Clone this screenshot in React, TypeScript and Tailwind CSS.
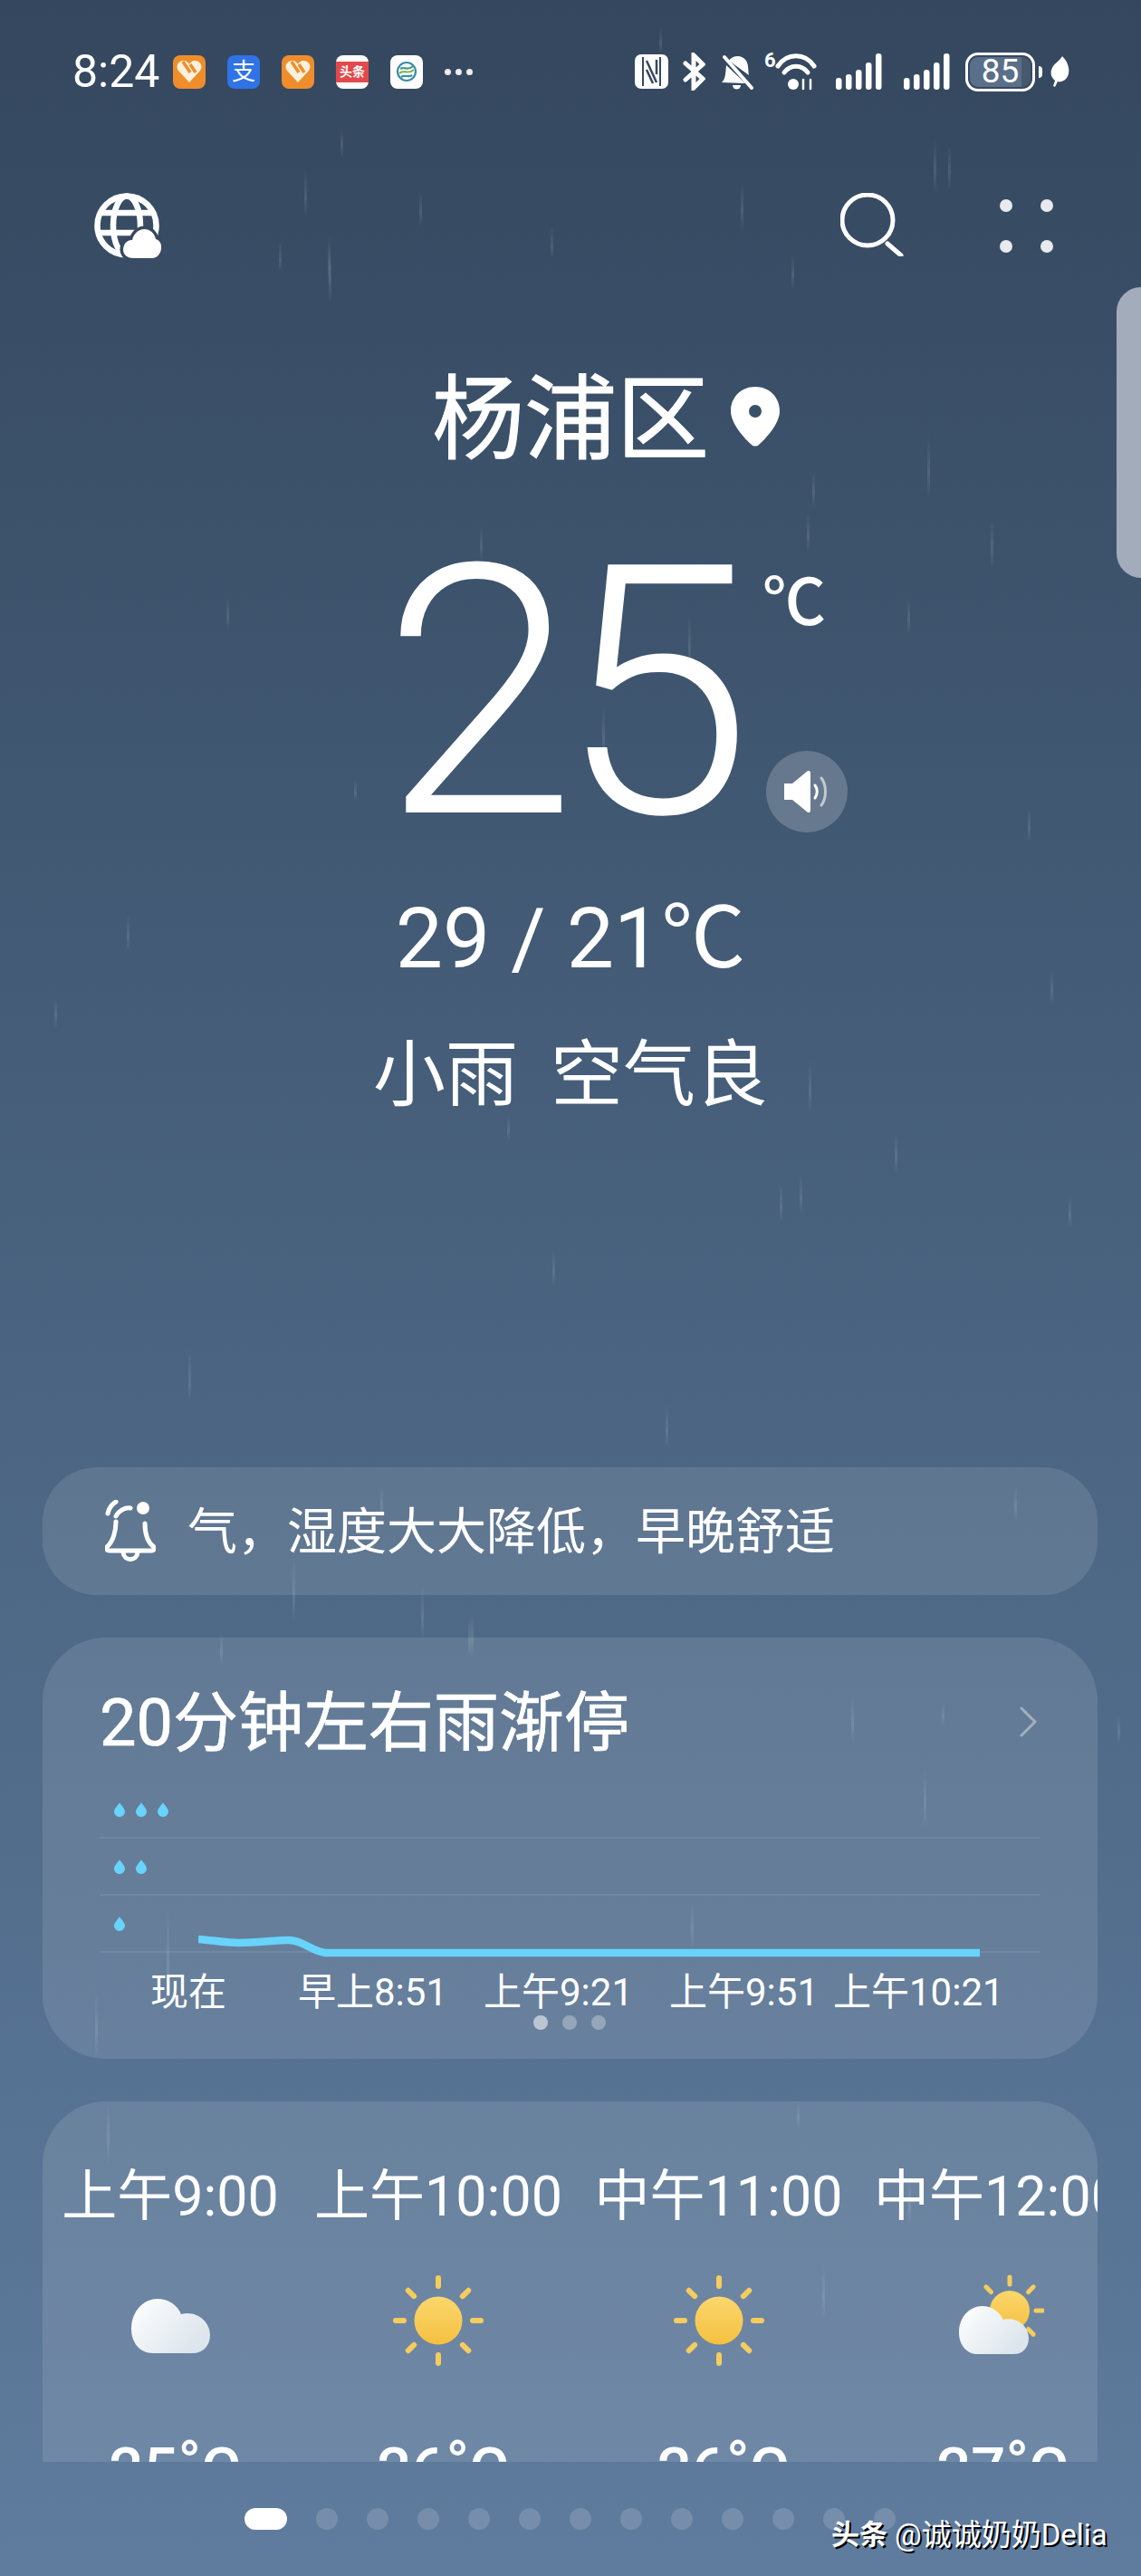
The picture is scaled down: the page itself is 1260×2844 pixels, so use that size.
// App.tsx - rainy weather screen
const rain = [
  [376, 140, 34], [336, 186, 54], [308, 265, 36], [362, 260, 58], [463, 210, 40], [608, 250, 36],
  [728, 30, 30], [1031, 153, 60], [1047, 160, 50], [818, 200, 55], [874, 280, 40], [1024, 480, 70],
  [897, 520, 40], [891, 565, 45], [1094, 570, 60], [530, 580, 40], [772, 620, 25], [760, 680, 60],
  [1002, 660, 40], [665, 780, 60], [1135, 890, 40], [1160, 1070, 40], [893, 1170, 60], [391, 860, 25],
  [208, 1487, 63], [517, 1785, 45], [861, 1305, 45], [988, 1250, 46], [883, 1296, 44], [363, 272, 63],
  [323, 1720, 70], [465, 1750, 60], [520, 1780, 50], [243, 1800, 40], [184, 2110, 100], [105, 2200, 72],
  [940, 1870, 55], [1040, 1880, 25], [1020, 1950, 70], [1234, 1895, 30], [763, 2100, 50], [118, 2320, 70],
  [880, 2320, 30], [1003, 2400, 60], [908, 2500, 60], [140, 1010, 40], [60, 1100, 35], [250, 660, 35],
  [610, 1380, 40], [1180, 1320, 36], [735, 1550, 50], [560, 1230, 30], [420, 1640, 40], [1120, 1640, 40],
];

const hours = [
  { time: '上午9:00', temp: '25', icon: 'cloud' },
  { time: '上午10:00', temp: '26', icon: 'sun' },
  { time: '中午11:00', temp: '26', icon: 'sun' },
  { time: '中午12:00', temp: '27', icon: 'partly' },
];

const Drop = () => (
  <svg width="12" height="16" viewBox="0 0 12 16">
    <path d="M6 0 C7.5 3 12 6.5 12 10.2 A6 5.8 0 0 1 0 10.2 C0 6.5 4.5 3 6 0Z" fill="#68d3fb" />
  </svg>
);

const Heart = () => (
  <div className="flex h-[37px] w-[36px] items-center justify-center rounded-[8px] bg-[#ef8d2c]">
    <svg width="28" height="26" viewBox="0 0 28 26">
      <path d="M14 25 L2 12 C-2 6 3 0 9 1 C11 1.500 13 3 14 5 C15 3 17 1.500 19 1 C25 0 30 6 26 12Z" fill="#fdf1dc" />
      <path d="M7 2 L15 14 M15 5 L21 14" stroke="#ef8d2c" strokeWidth="3.500" />
    </svg>
  </div>
);

const Signal = () => (
  <svg width="51" height="40" viewBox="0 0 51 40" fill="#fff">
    <rect x="0" y="27" width="6.500" height="13" rx="3" />
    <rect x="11" y="23" width="6.500" height="17" rx="3" />
    <rect x="22" y="18" width="6.500" height="22" rx="3" />
    <rect x="33" y="10" width="6.500" height="30" rx="3" />
    <rect x="44" y="0" width="6.500" height="40" rx="3" />
  </svg>
);

const Cloud = ({ id }: { id: string }) => (
  <svg className="mt-[12px]" width="87" height="60" viewBox="0 0 87 60">
    <defs>
      <linearGradient id={id} x1="0" y1="0" x2="1" y2="0.6">
        <stop offset="0" stopColor="#ffffff" />
        <stop offset="1" stopColor="#dce5ec" />
      </linearGradient>
    </defs>
    <path d="M24 60 C10 60 0 49 0 33 C0 14 13 0 29 0 C41 0 51 7 55 17 C58 16 60 16 62 16 C76 16 87 27 87 40 C87 52 79 60 68 60Z" fill={`url(#${id})`} />
  </svg>
);

const Rays = ({ cx, cy, r1, r2, w }: { cx: number; cy: number; r1: number; r2: number; w: number }) => (
  <g stroke="#f5cd5e" strokeWidth={w} strokeLinecap="round">
    {[0, 45, 90, 135, 180, 225, 270, 315].map((a) => (
      <line
        key={a}
        x1={cx + r1 * Math.cos((a * Math.PI) / 180)}
        y1={cy + r1 * Math.sin((a * Math.PI) / 180)}
        x2={cx + r2 * Math.cos((a * Math.PI) / 180)}
        y2={cy + r2 * Math.sin((a * Math.PI) / 180)}
      />
    ))}
  </g>
);

const Sun = () => (
  <svg width="102" height="102" viewBox="0 0 102 102">
    <defs>
      <linearGradient id="sunFill" x1="0" y1="0" x2="0" y2="1">
        <stop offset="0" stopColor="#fbd76c" />
        <stop offset="1" stopColor="#f5c040" />
      </linearGradient>
    </defs>
    <Rays cx={51} cy={51} r1={38} r2={47} w={6} />
    <circle cx="51" cy="51" r="26.500" fill="url(#sunFill)" />
  </svg>
);

const PartlySun = () => (
  <svg width="102" height="102" viewBox="0 0 102 102">
    <defs>
      <linearGradient id="sunFill2" x1="0" y1="0" x2="0" y2="1">
        <stop offset="0" stopColor="#fbd76c" />
        <stop offset="1" stopColor="#f5c040" />
      </linearGradient>
      <linearGradient id="cloud3" x1="0" y1="0" x2="1" y2="0.6">
        <stop offset="0" stopColor="#ffffff" />
        <stop offset="1" stopColor="#dce5ec" />
      </linearGradient>
    </defs>
    <Rays cx={64} cy={40} r1={29} r2={37} w={5} />
    <circle cx="64" cy="40" r="22" fill="url(#sunFill2)" />
    <g transform="translate(8 35) scale(0.885)">
      <path d="M24 60 C10 60 0 49 0 33 C0 14 13 0 29 0 C41 0 51 7 55 17 C58 16 60 16 62 16 C76 16 87 27 87 40 C87 52 79 60 68 60Z" fill="url(#cloud3)" />
    </g>
  </svg>
);

export default function App() {
  return (
    <div className="relative h-[2844px] w-[1260px] overflow-hidden bg-gradient-to-b from-[#34475e] via-[#4b6582] via-55% to-[#5f7c9e] font-['Roboto','Noto_Sans_CJK_SC',sans-serif] text-white">
      {/* rain behind everything */}
      <svg className="absolute inset-0" width="1260" height="2718" viewBox="0 0 1260 2718">
        <defs>
          <linearGradient id="streak" x1="0" y1="0" x2="0" y2="1">
            <stop offset="0" stopColor="#fff" stopOpacity="0" />
            <stop offset="0.6" stopColor="#fff" stopOpacity="0.11" />
            <stop offset="1" stopColor="#fff" stopOpacity="0" />
          </linearGradient>
        </defs>
        {rain.map(([x, y, h], i) => (
          <rect key={i} x={x} y={y} width="3" height={h} fill="url(#streak)" />
        ))}
      </svg>

      <div className="relative flex h-[2718px] flex-col overflow-hidden">
        {/* status bar */}
        <div className="flex h-[46px] mt-[56px] items-center justify-between pl-[80px] pr-[79px]">
          <div className="flex items-center">
            <span className="text-[50px] leading-[46px] w-[111px]">8:24</span>
            <div className="flex items-center gap-[24px]">
              <Heart />
              <div className="h-[37px] w-[36px] rounded-[8px] bg-[#2f73e6] text-[26px] leading-[37px] text-center">支</div>
              <Heart />
              <div className="flex h-[37px] w-[36px] items-center overflow-hidden rounded-[8px] bg-white">
                <div className="h-[23px] w-full bg-[#e2494b] text-[14px] leading-[23px] text-center font-bold whitespace-nowrap">头条</div>
              </div>
              <div className="flex h-[37px] w-[36px] items-center justify-center rounded-[8px] bg-white">
                <svg width="24" height="24" viewBox="0 0 24 24" fill="none" strokeWidth="2.200">
                  <circle cx="12" cy="12" r="10" stroke="#3b8ea8" />
                  <path d="M4 14 C9 9 14 16 20 10" stroke="#7db55a" />
                  <path d="M5 9 C10 6 13 12 19 6" stroke="#4a9a8e" />
                  <path d="M6 18 C10 15 14 19 18 16" stroke="#3b8ea8" />
                </svg>
              </div>
              <div className="flex items-center gap-[5px]">
                <span className="h-[7px] w-[7px] rounded-full bg-white/90" />
                <span className="h-[7px] w-[7px] rounded-full bg-white/90" />
                <span className="h-[7px] w-[7px] rounded-full bg-white/90" />
              </div>
            </div>
          </div>
          <div className="flex items-center">
            {/* NFC */}
            <svg width="37" height="38" viewBox="0 0 37 38">
              <rect width="37" height="38" rx="7" fill="#fff" />
              <path d="M9 3 V35 M28 3 V35" stroke="#35495f" strokeWidth="2" />
              <path d="M13 7 L24 31 M13 17 L20 32 M24 6 V22" stroke="#35495f" strokeWidth="2.500" fill="none" />
            </svg>
            {/* Bluetooth */}
            <svg className="ml-[16px]" width="25" height="42" viewBox="0 0 25 42" fill="none" stroke="#fff" strokeWidth="5" strokeLinecap="round">
              <path d="M3 12 L22 29 L12 39 V3 L22 13 L3 30" />
            </svg>
            {/* muted bell */}
            <svg className="ml-[16px]" width="37" height="40" viewBox="0 0 37 40">
              <path d="M2 32 C6 28 6 24 7 13 L26 31 L28 33 Z" fill="#fff" />
              <path d="M10 8 C14 2 24 1 29 8 C32 13 31 20 32 24Z" fill="#fff" />
              <path d="M14 35 H23 A4.500 4.500 0 0 1 14 35Z" fill="#fff" />
              <path d="M5 4 L35 38" stroke="#fff" strokeWidth="4" strokeLinecap="round" />
            </svg>
            {/* wifi with 6 */}
            <div className="relative ml-[12px] h-[42px] w-[58px]">
              <span className="absolute left-0 -top-[2px] text-[22px] leading-[22px] font-bold">6</span>
              <svg className="absolute left-[12px] top-0" width="46" height="42" viewBox="0 0 46 42" fill="none" stroke="#fff" strokeWidth="5" strokeLinecap="round">
                <path d="M3 15 C13 0 33 0 43 15" />
                <path d="M10 22 C17 13 29 13 36 22" />
                <circle cx="20" cy="35" r="6" fill="#fff" stroke="none" />
                <path d="M31 30 V40 M39 30 V40" strokeWidth="2.500" />
              </svg>
            </div>
            <div className="ml-[21px] flex items-center gap-[24px]">
              <Signal />
              <Signal />
            </div>
            {/* battery */}
            <div className="ml-[17px] flex h-[43px] w-[77px] items-center justify-center rounded-[14px] border-[3.500px] border-white p-[2px]">
              <div className="h-full w-full rounded-[9px] bg-gradient-to-r from-[#5a6f8a] from-85% to-[#46596f] to-85% text-center text-[37px] leading-[32px]">85</div>
            </div>
            <span className="ml-[4px] h-[13px] w-[4px] rounded-r-full bg-white" />
            <svg className="ml-[9px]" width="21" height="34" viewBox="0 0 21 34">
              <path d="M13 0 C20 7 22 16 19 22 C17 27 12 29 8 28 L5 34 L3 33 L5 27 C0 23 -1 17 3 11 C5 8 11 4 13 0Z" fill="#fff" />
            </svg>
          </div>
        </div>

        {/* toolbar */}
        <div className="mt-[111px] flex items-start justify-between pl-[104px] pr-[97px]">
          <svg width="74" height="72" viewBox="0 0 74 72" fill="none">
            <g stroke="#fff" strokeWidth="6.500">
              <circle cx="36" cy="36" r="32.500" />
              <ellipse cx="36" cy="36" rx="15" ry="32.500" />
              <path d="M6 22 H66 M3 44 H69" />
            </g>
            <path d="M43 72 C34 72 30 65 33 58 C35 53 39 52 42 52 C44 44 50 40 55 40 C63 40 67 46 68 51 C72 52 75 56 74 62 C73 68 69 72 64 72Z" fill="#fff" stroke="#37495f" strokeWidth="7" />
            <path d="M43 72 C34 72 30 65 33 58 C35 53 39 52 42 52 C44 44 50 40 55 40 C63 40 67 46 68 51 C72 52 75 56 74 62 C73 68 69 72 64 72Z" fill="#fff" />
          </svg>
          <div className="flex items-start">
            <svg width="70" height="70" viewBox="0 0 70 70" fill="none" stroke="#fff" strokeWidth="5" strokeLinecap="round">
              <circle cx="30" cy="30" r="28" />
              <path d="M52 56 L67 69" />
            </svg>
            <div className="ml-[106px] mt-[7px] grid grid-cols-2 gap-x-[31px] gap-y-[31px]">
              <span className="h-[14px] w-[14px] rounded-full bg-[#e8eaee]" />
              <span className="h-[14px] w-[14px] rounded-full bg-[#e8eaee]" />
              <span className="h-[14px] w-[14px] rounded-full bg-[#e8eaee]" />
              <span className="h-[14px] w-[14px] rounded-full bg-[#e8eaee]" />
            </div>
          </div>
        </div>

        {/* city */}
        <div className="relative mx-auto mt-[129px] text-[102px] leading-[100px] [-webkit-text-stroke:1px_white]">
          杨浦区
          <svg className="absolute left-[330px] top-[13px]" width="54" height="66" viewBox="0 0 54 66">
            <path fillRule="evenodd" d="M27 0 C42 0 54 11 54 27 C54 41 38 58 31 64 C29 66 25 66 23 64 C16 58 0 41 0 27 C0 11 12 0 27 0Z M27 20 A7 7 0 1 0 27 34 A7 7 0 1 0 27 20Z" fill="#fff" />
          </svg>
        </div>

        {/* temperature */}
        <div className="relative mx-auto mt-[109px] h-[285px] w-[372px]">
          <div className="flex h-full items-center justify-center text-[385px] leading-[285px] font-light tracking-[-19px] -translate-x-[13px]">25</div>
          <span className="absolute left-[398px] top-[5px] text-[70px] leading-[76px] font-medium tracking-[-4px]">℃</span>
          <div className="absolute left-[402px] top-[206px] flex h-[90px] w-[90px] items-center justify-center rounded-full bg-white/20">
            <svg width="50" height="46" viewBox="0 0 50 46" fill="none">
              <path d="M0 14 H9 L26 0 C28 -1 29 1 29 3 V43 C29 45 28 47 26 46 L9 32 H0 Z" fill="#fff" />
              <path d="M34 16 C37 20 37 26 34 30" stroke="#fff" strokeWidth="3" strokeLinecap="round" />
              <path d="M41 8 C47 16 47 30 41 38" stroke="#fff" strokeOpacity="0.6" strokeWidth="3" strokeLinecap="round" />
            </svg>
          </div>
        </div>

        <div className="mt-[89px] text-center text-[93px] leading-[80px]">29 / 21℃</div>
        <div className="mt-[68px] flex justify-center gap-[36px] text-[80px] leading-[84px]">
          <span>小雨</span>
          <span>空气良</span>
        </div>

        {/* cards */}
        <div className="mt-[391px] mx-[47px] flex w-[1165px] flex-col gap-[47px]">
          <div className="flex h-[141px] items-center rounded-[60px] bg-white/11 pl-[69px]">
            <svg width="56" height="70" viewBox="0 0 56 70" fill="none" stroke="#fff" strokeWidth="5" strokeLinecap="round" strokeLinejoin="round">
              <path d="M12 18 C15 12 22 8 28 9 M44 26 C44 36 46 46 54 52 C55 54 54 56 51 56 H5 C2 56 1 54 2 52 C9 46 12 34 12 24" />
              <path d="M20 58 C21 68 35 68 36 58" />
              <path d="M12 2 C7 5 4 10 3 15" />
              <circle cx="42" cy="9" r="7" fill="#fff" stroke="none" />
            </svg>
            <span className="ml-[35px] text-[55px] leading-[60px] whitespace-nowrap">气，湿度大大降低，早晚舒适</span>
          </div>

          <div className="relative h-[465px] rounded-[70px] bg-white/11 px-[63px] pt-[50px]">
            <div className="flex items-center justify-between">
              <span className="text-[72px] leading-[90px] [-webkit-text-stroke:0.7px_white] whitespace-nowrap">20分钟左右雨渐停</span>
              <svg className="mr-[4px] mb-[4px]" width="19" height="34" viewBox="0 0 19 34" fill="none" stroke="#fff" strokeOpacity="0.4" strokeWidth="3" strokeLinecap="round">
                <path d="M2 2 L17 17 L2 32" />
              </svg>
            </div>
            <div className="relative mt-[19px]">
              <div className="flex h-[63px] items-center gap-[12px] border-b-2 border-white/8 pl-[16px]">
                <Drop />
                <Drop />
                <Drop />
              </div>
              <div className="flex h-[63px] items-center gap-[12px] border-b-2 border-white/8 pl-[16px]">
                <Drop />
                <Drop />
              </div>
              <div className="flex h-[63px] items-center gap-[12px] border-b-2 border-white/8 pl-[16px]">
                <Drop />
              </div>
              <svg className="absolute left-[109px] top-[165px]" width="863" height="30" viewBox="0 0 863 30" fill="none">
                <path d="M0 9 C15 10 30 13 45 13 C65 13 85 10 100 10 C115 10 125 22 140 24 H863" stroke="#68d3fb" strokeWidth="8.500" />
              </svg>
            </div>
            <div className="mt-[23px] grid grid-cols-[163px_205px_205px_181px_auto] pl-[56px] text-[42px] leading-[42px] whitespace-nowrap">
              <span>现在</span>
              <span>早上8:51</span>
              <span>上午9:21</span>
              <span>上午9:51</span>
              <span>上午10:21</span>
            </div>
            <div className="absolute bottom-[32px] left-[542px] flex gap-[16px]">
              <span className="h-[16px] w-[16px] rounded-full bg-white/55" />
              <span className="h-[16px] w-[16px] rounded-full bg-white/30" />
              <span className="h-[16px] w-[16px] rounded-full bg-white/30" />
            </div>
          </div>

          <div className="h-[460px] overflow-hidden rounded-[70px] bg-white/11">
            <div className="grid grid-cols-[282px_310px_309px_308px] pt-[75px] whitespace-nowrap">
              {hours.map((h) => (
                <div key={h.time} className="flex flex-col items-center">
                  <span className="text-[61px] leading-[60px]">{h.time}</span>
                  <div className="mt-[56px] flex h-[102px] items-center justify-center">
                    {h.icon === 'cloud' && <Cloud id="cloud1" />}
                    {h.icon === 'sun' && <Sun />}
                    {h.icon === 'partly' && <PartlySun />}
                  </div>
                  <span className="mt-[82px] ml-[10px] text-[67px] leading-[65px] font-medium">
                    {h.temp}
                    <span className="relative -top-[8px]">°</span>C
                  </span>
                </div>
              ))}
            </div>
          </div>
        </div>
      </div>

      {/* pager */}
      <div className="flex h-[126px] items-center gap-[32px] pl-[270px]">
        <span className="h-[24px] w-[47px] rounded-full bg-white" />
        {Array.from({ length: 12 }).map((_, i) => (
          <span key={i} className="h-[24px] w-[24px] rounded-full bg-white/15" />
        ))}
      </div>

      {/* right edge handle */}
      <div className="absolute right-0 top-[317px] h-[321px] w-[27px] rounded-l-[28px] bg-[#a2acba]" />

      {/* watermark */}
      <div className="absolute left-[918px] top-[2781px] flex items-center whitespace-nowrap text-[31px] leading-[36px] [text-shadow:2px_2px_0_#000]">
        <span className="font-bold">头条</span>
        <span className="ml-[8px] text-[33px]">@诚诚奶奶Delia</span>
      </div>
    </div>
  );
}
